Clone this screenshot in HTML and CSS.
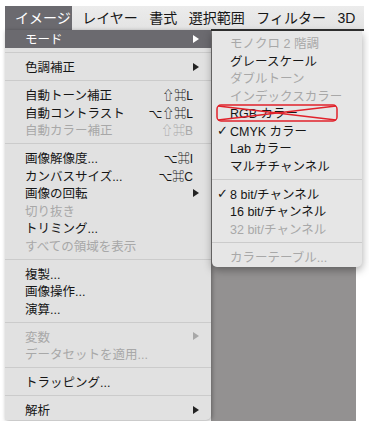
FILE: index.html
```html
<!DOCTYPE html>
<html lang="ja">
<head>
    <meta charset="UTF-8">
    <meta name="viewport" content="width=device-width, initial-scale=1.0">
    <title>イメージ メニュー</title>
    <link rel="stylesheet" href="styles.css">
</head>
<body>

    <div class="screen">
        <!-- Menu bar -->
        <div class="menubar">
            <span class="menubar-title active">イメージ</span>
            <span class="menubar-title">レイヤー</span>
            <span class="menubar-title">書式</span>
            <span class="menubar-title">選択範囲</span>
            <span class="menubar-title">フィルター</span>
            <span class="menubar-title">3D</span>
        </div>

        <div class="workspace">
            <!-- Image menu -->
            <ul class="menu main-menu">
                <li class="item active"><span class="label">モード</span><span class="arrow"></span></li>
                <li class="sep"></li>
                <li class="item"><span class="label">色調補正</span><span class="arrow"></span></li>
                <li class="sep"></li>
                <li class="item"><span class="label">自動トーン補正</span><span class="shortcut">⇧⌘L</span></li>
                <li class="item"><span class="label">自動コントラスト</span><span class="shortcut">⌥⇧⌘L</span></li>
                <li class="item disabled"><span class="label">自動カラー補正</span><span class="shortcut">⇧⌘B</span></li>
                <li class="sep"></li>
                <li class="item"><span class="label">画像解像度...</span><span class="shortcut">⌥⌘I</span></li>
                <li class="item"><span class="label">カンバスサイズ...</span><span class="shortcut">⌥⌘C</span></li>
                <li class="item"><span class="label">画像の回転</span><span class="arrow"></span></li>
                <li class="item disabled"><span class="label">切り抜き</span></li>
                <li class="item"><span class="label">トリミング...</span></li>
                <li class="item disabled"><span class="label">すべての領域を表示</span></li>
                <li class="sep"></li>
                <li class="item"><span class="label">複製...</span></li>
                <li class="item"><span class="label">画像操作...</span></li>
                <li class="item"><span class="label">演算...</span></li>
                <li class="sep"></li>
                <li class="item disabled"><span class="label">変数</span><span class="arrow"></span></li>
                <li class="item disabled"><span class="label">データセットを適用...</span></li>
                <li class="sep"></li>
                <li class="item"><span class="label">トラッピング...</span></li>
                <li class="sep"></li>
                <li class="item"><span class="label">解析</span><span class="arrow"></span></li>
            </ul>

            <!-- Document window behind the menus -->
            <div class="document">
                <div class="canvas"></div>
            </div>

            <!-- Mode submenu -->
            <ul class="menu submenu">
                <li class="item disabled"><span class="mark"></span>モノクロ 2 階調</li>
                <li class="item"><span class="mark"></span>グレースケール</li>
                <li class="item disabled"><span class="mark"></span>ダブルトーン</li>
                <li class="item disabled"><span class="mark"></span>インデックスカラー</li>
                <li class="item crossed">
                    <span class="mark"></span>RGB カラー
                    <svg class="cross-out" width="122" height="18" viewBox="0 0 122 18">
                        <rect x="1" y="1" width="120" height="16" rx="4" ry="4" />
                        <line x1="2" y1="2" x2="120" y2="16" />
                        <line x1="2" y1="16" x2="120" y2="2" />
                    </svg>
                </li>
                <li class="item"><span class="mark">✓</span>CMYK カラー</li>
                <li class="item"><span class="mark"></span>Lab カラー</li>
                <li class="item"><span class="mark"></span>マルチチャンネル</li>
                <li class="sep"></li>
                <li class="item"><span class="mark">✓</span>8 bit/チャンネル</li>
                <li class="item"><span class="mark"></span>16 bit/チャンネル</li>
                <li class="item disabled"><span class="mark"></span>32 bit/チャンネル</li>
                <li class="sep"></li>
                <li class="item disabled"><span class="mark"></span>カラーテーブル...</li>
            </ul>
        </div>
    </div>

</body>
</html>
```

FILE: styles.css
```css
/* General */
* {
    box-sizing: border-box;
}

body {
    margin: 0;
    background-color: #fff;
    font-family: "Liberation Sans", "Noto Sans CJK JP", sans-serif;
    color: #161616;
}

.screen {
    width: 359px;
    margin: 6px 0 0 5px;
}

/* Menu bar */
.menubar {
    display: flex;
    align-items: center;
    height: 24px;
    background: linear-gradient(#ececec, #e3e3e3);
    font-size: 14px;
}

.menubar-title {
    margin-left: 11.5px;
    line-height: 24px;
    white-space: nowrap;
}

.menubar-title.active {
    margin-left: 0;
    padding: 0 1.5px 0 10px;
    background-color: #6b6a6f;
    color: #fff;
}

.menubar-title.active + .menubar-title {
    margin-left: 10px;
}

/* Area under the menu bar */
.workspace {
    position: relative;
    display: flex;
    align-items: flex-start;
}

.document {
    flex: 1;
    height: 392px;
    margin-top: -1px;
    border-top: 2px solid #313131;
    background-color: #fff;
}

.canvas {
    width: 145px;
    height: 100%;
    background-color: #939191;
}

/* Menus */
.menu {
    list-style: none;
    margin: 0;
    font-size: 12.5px;
}

.main-menu {
    position: relative;
    z-index: 1;
    width: 206px;
    padding: 0 0 1.5px;
    background-color: #e1e1e1;
    border-bottom-right-radius: 5px;
    box-shadow: 1px 1px 4px rgba(0, 0, 0, 0.35);
}

.submenu {
    position: absolute;
    z-index: 2;
    top: 1px;
    left: 207px;
    width: 150px;
    padding: 3px 0 2px;
    background-color: #e6e6e6;
    border-radius: 0 0 5px 5px;
    box-shadow: 0 3px 8px rgba(0, 0, 0, 0.35);
}

.item {
    display: flex;
    align-items: center;
    height: 17.5px;
    white-space: nowrap;
}

.main-menu .item {
    padding: 0 12px 0 20px;
}

.submenu .item {
    padding-left: 5px;
}

.item.active {
    background-color: #6b6a6f;
    color: #fff;
}

.item.disabled {
    color: #a8a8a8;
}

.label {
    flex: 1;
}

.shortcut {
    margin-right: 6px;
    font-family: "Liberation Sans", "Noto Sans CJK JP", "DejaVu Sans", sans-serif;
    font-size: 12px;
}

.arrow {
    width: 0;
    height: 0;
    border-left: 6px solid #222;
    border-top: 4px solid transparent;
    border-bottom: 4px solid transparent;
}

.active .arrow {
    border-left-color: #fff;
}

.disabled .arrow {
    border-left-color: #a8a8a8;
}

.mark {
    width: 13px;
    font-family: "DejaVu Sans", sans-serif;
    font-size: 13px;
    font-weight: bold;
}

.sep {
    height: 1px;
    margin: 4.75px 0;
    background-color: #cbcbcb;
}

/* Red annotation over the RGB row */
.crossed {
    position: relative;
}

.cross-out {
    position: absolute;
    top: 0;
    left: 4px;
    fill: none;
    stroke: #e1222b;
    stroke-width: 1.5;
}
```
